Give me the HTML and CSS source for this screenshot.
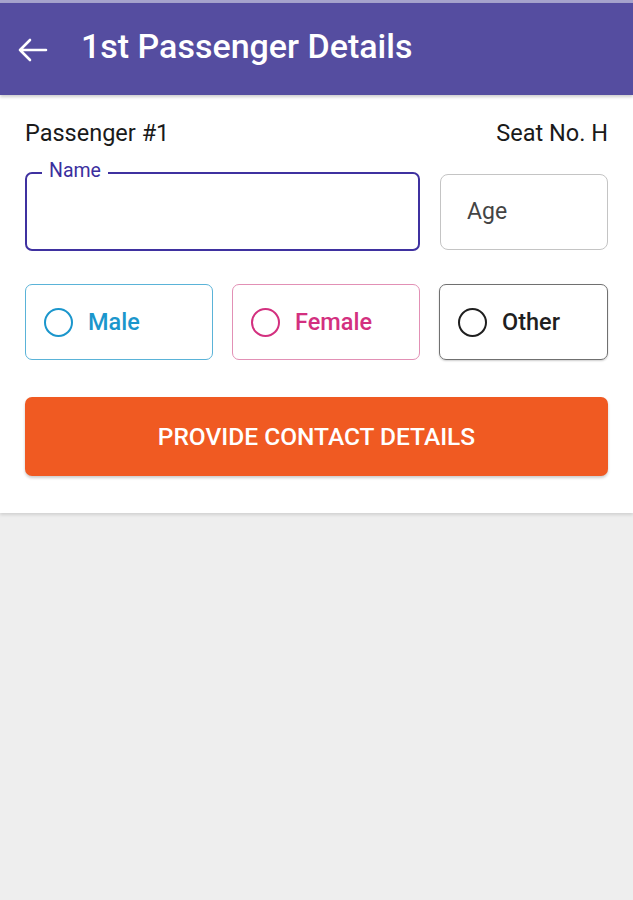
FILE: index.html
```html
<!DOCTYPE html>
<html lang="en">
<head>
    <meta charset="UTF-8">
    <meta name="viewport" content="width=device-width, initial-scale=1.0">
    <title>1st Passenger Details</title>
    <link rel="stylesheet" href="styles.css">
</head>
<body>
    <div class="status-line"></div>
    <header class="app-bar">
        <button class="back-button" type="button" aria-label="Back">
            <svg width="32" height="26" viewBox="0 0 32 26">
                <path d="M3 13 H29 M3 13 L13 3 M3 13 L13 23" fill="none" stroke="#ffffff" stroke-width="2.6" stroke-linecap="round" stroke-linejoin="round"/>
            </svg>
        </button>
        <h1>1st Passenger Details</h1>
    </header>

    <main class="passenger-card">
        <div class="card-head">
            <span>Passenger #1</span>
            <span>Seat No. H</span>
        </div>

        <div class="field-row">
            <div class="field name-field">
                <label class="field-label" for="name">Name</label>
                <input type="text" id="name">
            </div>
            <div class="field age-field">
                <input type="text" id="age" placeholder="Age">
            </div>
        </div>

        <div class="gender-row">
            <label class="gender male">
                <span class="radio"></span>
                <span>Male</span>
            </label>
            <label class="gender female">
                <span class="radio"></span>
                <span>Female</span>
            </label>
            <label class="gender other">
                <span class="radio"></span>
                <span>Other</span>
            </label>
        </div>

        <button class="contact-button" type="button">PROVIDE CONTACT DETAILS</button>
    </main>
</body>
</html>
```

FILE: styles.css
```css
body {
    margin: 0;
    font-family: Roboto, "Liberation Sans", sans-serif;
    background-color: #eeeeee;
    min-height: 900px;
}

.status-line {
    height: 3px;
    background-color: #a6a3cc;
}

.app-bar {
    display: flex;
    align-items: center;
    height: 92px;
    background-color: #554da0;
    color: #ffffff;
    box-shadow: 0 2px 3px rgba(0, 0, 0, 0.2);
    position: relative;
    z-index: 1;
}

.back-button {
    display: flex;
    align-items: center;
    background: none;
    border: none;
    padding: 0;
    margin-left: 17px;
    margin-right: 32px;
    margin-top: 2px;
}

.app-bar h1 {
    margin: 0 0 6px 0;
    font-size: 34px;
    font-weight: 500;
}

.passenger-card {
    background-color: #ffffff;
    padding: 24px 25px 37px 25px;
    box-shadow: 0 2px 3px rgba(0, 0, 0, 0.12);
}

.card-head {
    display: flex;
    justify-content: space-between;
    font-size: 23.5px;
    color: #1a1a1a;
    line-height: 28px;
}

.field-row {
    display: flex;
    align-items: center;
    gap: 20px;
    margin-top: 25px;
}

.field {
    position: relative;
}

.name-field {
    flex: 0 0 395px;
}

.age-field {
    flex: 1;
}

.field input {
    width: 100%;
    box-sizing: border-box;
    font-family: inherit;
    font-size: 23px;
    background: #ffffff;
    outline: none;
}

.name-field input {
    height: 79px;
    border: 2px solid #3f31a0;
    border-radius: 7px;
}

.age-field input {
    height: 76px;
    border: 1px solid #c4c4c4;
    border-radius: 8px;
    padding-left: 26px;
    color: #333333;
}

.age-field input::placeholder {
    color: #444444;
}

.field-label {
    position: absolute;
    top: -12px;
    left: 17px;
    padding: 0 7px;
    background-color: #ffffff;
    color: #3b2f9e;
    font-size: 19.5px;
    line-height: 22px;
}

.gender-row {
    display: grid;
    grid-template-columns: 188px 188px 1fr;
    gap: 19px;
    margin-top: 33px;
}

.gender {
    display: flex;
    align-items: center;
    height: 76px;
    box-sizing: border-box;
    padding-left: 18px;
    border-radius: 7px;
    font-size: 23.5px;
    font-weight: 500;
}

.gender .radio {
    width: 25px;
    height: 25px;
    border: 2.5px solid currentColor;
    border-radius: 50%;
    margin-right: 15px;
}

.gender.male {
    border: 1px solid #5ab3d8;
    color: #1b96cc;
}

.gender.female {
    border: 1px solid #e290b5;
    color: #d3307f;
}

.gender.other {
    border: 1px solid #707070;
    color: #1f1f1f;
    box-shadow: 0 1px 2px rgba(0, 0, 0, 0.2);
}

.contact-button {
    display: block;
    width: 100%;
    height: 79px;
    margin-top: 37px;
    border: none;
    border-radius: 7px;
    background-color: #f05a22;
    color: #ffffff;
    font-family: inherit;
    font-size: 24.5px;
    font-weight: 500;
    box-shadow: 0 2px 3px rgba(0, 0, 0, 0.2);
}
```
